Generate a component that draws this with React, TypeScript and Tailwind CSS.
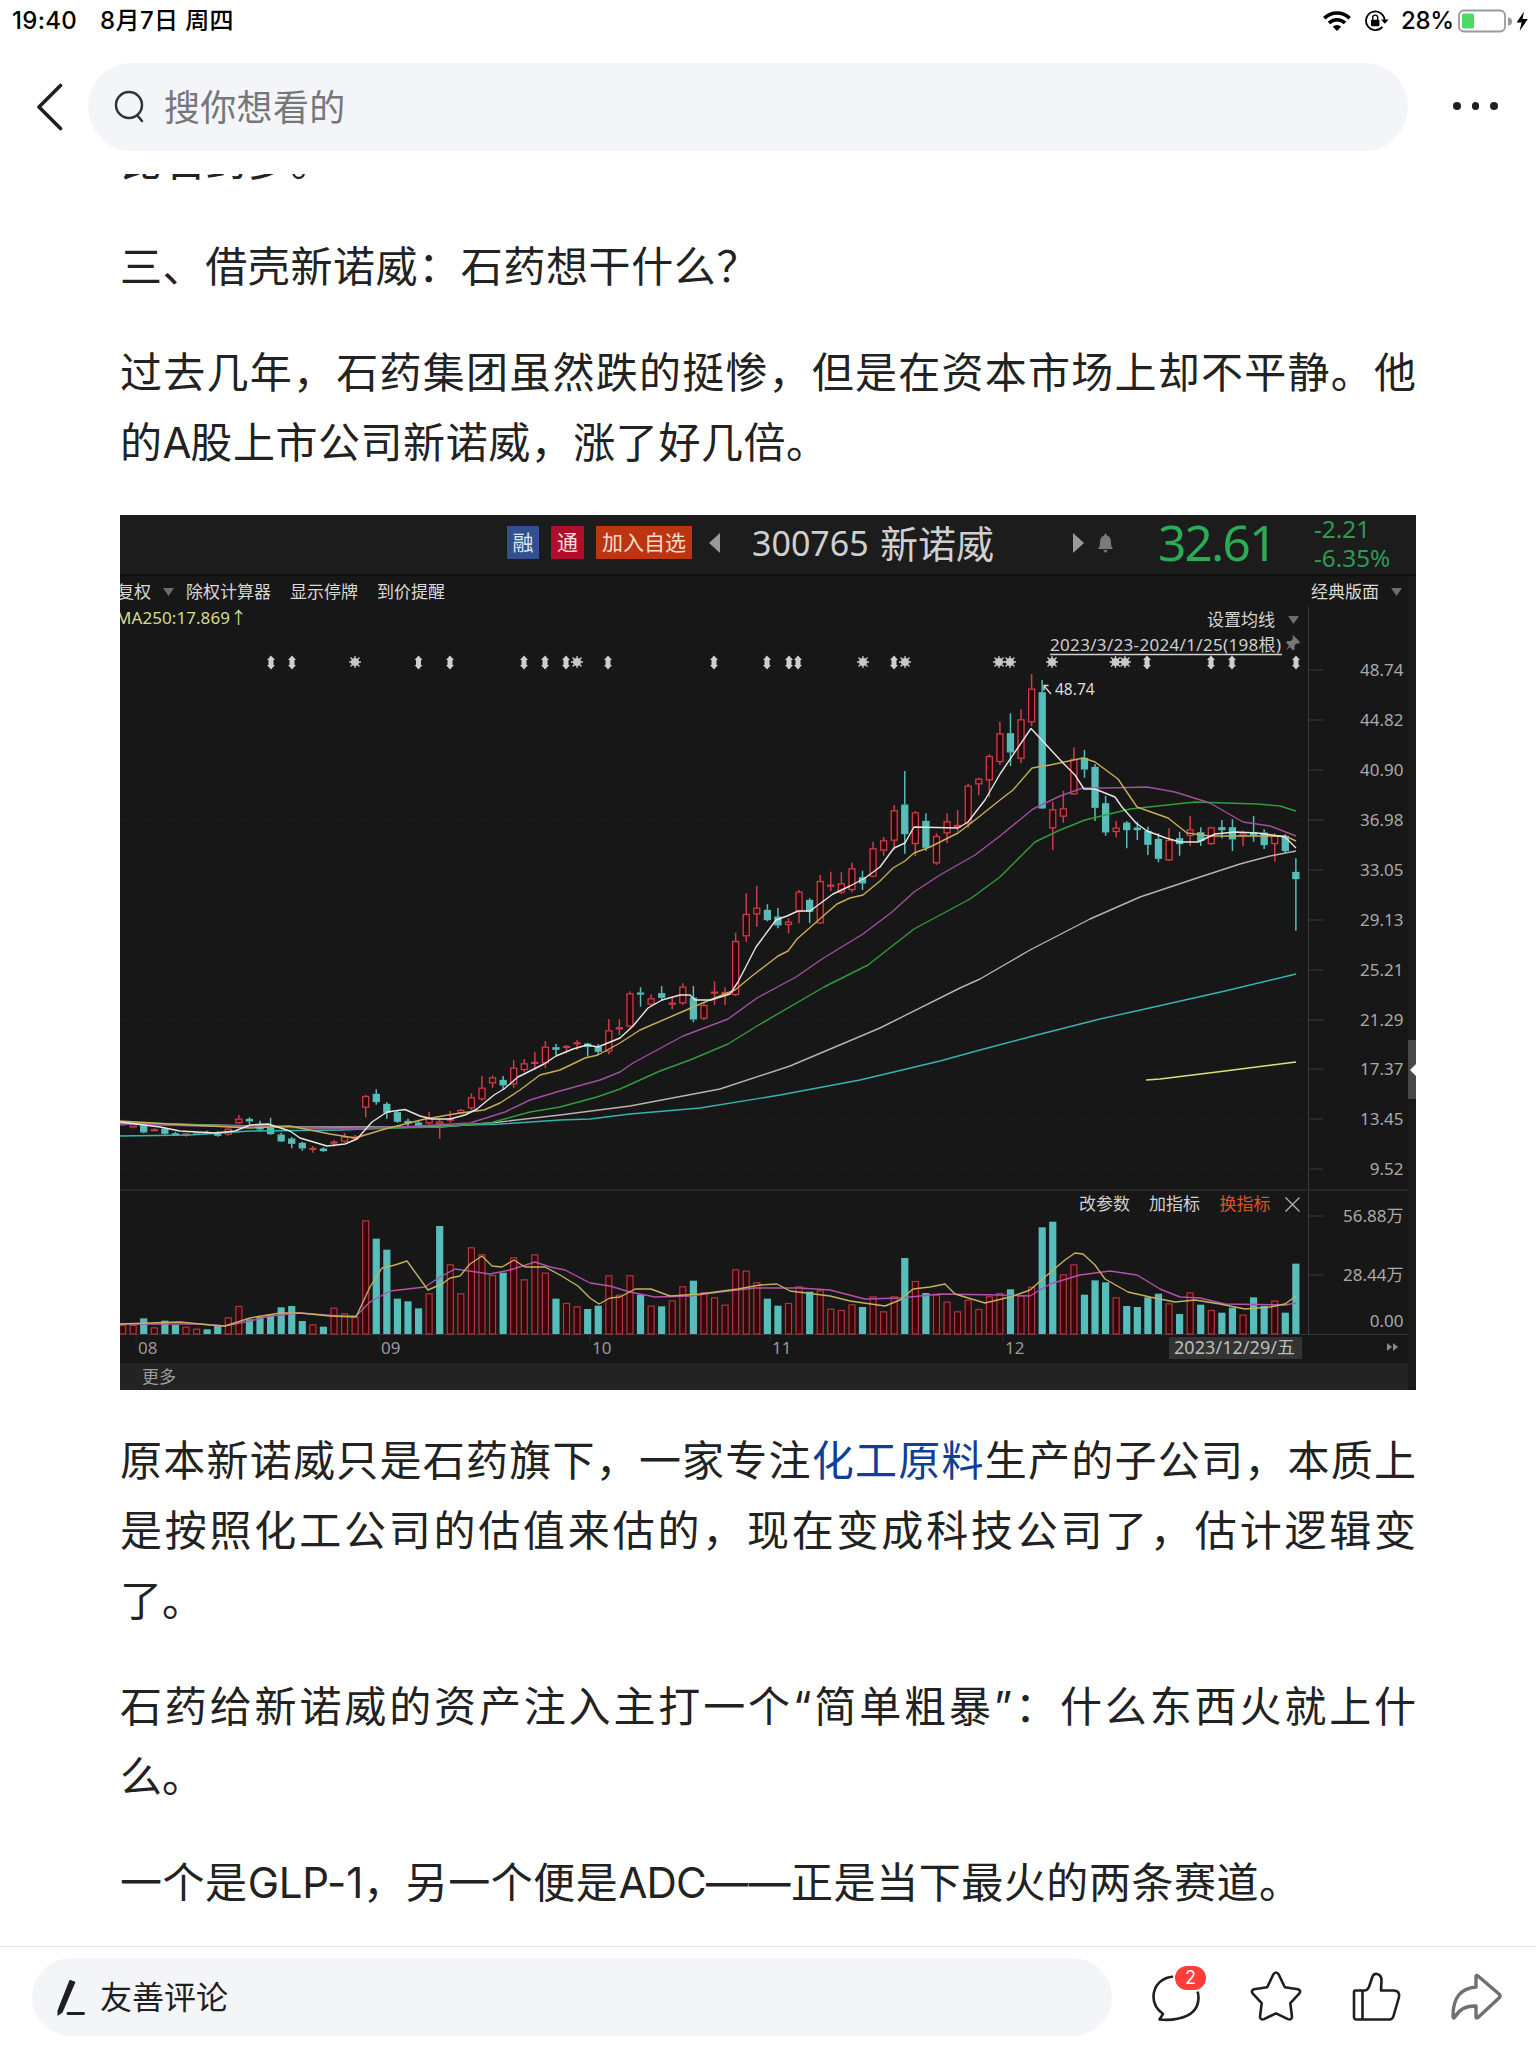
type Row = readonly [string, number, number, number, number];

const X0 = 122.6;
const STEP = 10.57;

const PRICE_TICKS = [
  ["48.74", 670],
  ["44.82", 720],
  ["40.90", 770],
  ["36.98", 820],
  ["33.05", 870],
  ["29.13", 920],
  ["25.21", 970],
  ["21.29", 1020],
  ["17.37", 1069],
  ["13.45", 1119],
  ["9.52", 1169],
  ["56.88万", 1216],
  ["28.44万", 1275],
] as const;

const MONTHS = [
  ["08", 138],
  ["09", 381],
  ["10", 592],
  ["11", 772],
  ["12", 1005],
] as const;

const ARROWS = [271, 292, 418.5, 450, 524, 545, 566, 608, 714, 767, 789, 798, 894, 1147, 1211, 1232, 1296];
const STARS = [355, 577, 863, 905, 999, 1010, 1052, 1115.5, 1125];

// colour, high, body top, body bottom, low - in thirds of a pixel below `base`
const SEGMENTS: { base: number; rows: Row[] }[] = [
  {
    base: 1040,
    rows: [
      ["r", 245, 248, 256, 258], ["r", 245, 252, 262, 265], ["c", 252, 256, 277, 280], ["r", 265, 268, 272, 274],
      ["c", 262, 266, 281, 285], ["c", 275, 280, 285, 287], ["r", 278, 280, 287, 290], ["r", 274, 277, 281, 285],
      ["c", 272, 276, 280, 283], ["c", 274, 277, 287, 290], ["r", 262, 266, 284, 287], ["r", 225, 236, 250, 252],
      ["c", 232, 237, 244, 252], ["c", 242, 252, 268, 275], ["c", 233, 262, 282, 284], ["c", 278, 284, 304, 306],
      ["c", 291, 296, 311, 325], ["c", 305, 309, 325, 332], ["r", 318, 324, 329, 338], ["c", 322, 326, 333, 335],
      ["r", 300, 305, 310, 320], ["r", 278, 290, 305, 308], ["r", 284, 290, 296, 298], ["r", 165, 168, 203, 232],
      ["c", 148, 162, 186, 194], ["c", 186, 192, 218, 236], ["c", 212, 217, 245, 248], ["c", 236, 243, 250, 258],
      ["c", 243, 248, 257, 262], ["r", 216, 236, 250, 254], ["r", 238, 244, 252, 297], ["r", 213, 236, 242, 248],
      ["r", 207, 210, 220, 223], ["r", 160, 172, 205, 210], ["r", 108, 143, 178, 182], ["r", 106, 112, 130, 143],
      ["c", 108, 120, 136, 150], ["r", 60, 83, 133, 143], ["r", 57, 70, 90, 95], ["r", 36, 66, 71, 90],
      ["r", 3, 20, 70, 84], ["c", 12, 22, 29, 45], ["r", 15, 18, 23, 40], ["r", 0, 7, 12, 30],
    ],
  },
  {
    base: 740,
    rows: [
      ["c", 908, 911, 920, 950], ["c", 912, 920, 935, 945], ["r", 838, 871, 935, 943], ["r", 838, 862, 868, 885],
      ["r", 754, 760, 860, 862], ["c", 742, 758, 763, 800], ["r", 763, 775, 794, 797], ["c", 738, 760, 773, 783],
      ["r", 770, 788, 794, 808], ["r", 730, 740, 790, 795], ["c", 738, 773, 838, 847], ["r", 790, 795, 836, 840],
      ["r", 724, 755, 761, 795], ["r", 742, 756, 762, 795], ["r", 578, 603, 765, 768], ["r", 460, 522, 589, 605],
      ["r", 437, 503, 523, 560], ["c", 493, 510, 540, 544], ["c", 504, 530, 556, 565], ["r", 535, 545, 555, 580],
      ["r", 450, 455, 515, 550], ["c", 475, 480, 515, 550], ["r", 405, 423, 550, 552], ["r", 395, 434, 440, 453],
      ["r", 397, 430, 458, 462], ["r", 368, 385, 450, 457], ["c", 392, 412, 430, 450], ["r", 305, 325, 410, 412],
      ["r", 291, 301, 332, 347], ["r", 195, 211, 302, 330], ["c", 93, 194, 282, 341], ["r", 213, 217, 312, 348],
      ["c", 220, 243, 323, 333], ["r", 280, 288, 370, 375], ["r", 220, 244, 280, 310], ["r", 210, 255, 262, 275],
      ["r", 132, 137, 250, 263], ["r", 113, 116, 133, 165], ["r", 43, 48, 121, 172],
    ],
  },
  {
    base: 640,
    rows: [
      ["r", 245, 280, 366, 375], ["c", 220, 280, 337, 378], ["r", 208, 238, 356, 370], ["r", 102, 146, 247, 258],
      ["c", 120, 157, 505, 507], ["r", 485, 508, 565, 630], ["r", 452, 505, 530, 548], ["r", 322, 357, 463, 465],
      ["c", 330, 354, 388, 413], ["c", 372, 381, 503, 543], ["c", 467, 490, 577, 587], ["r", 543, 563, 576, 592],
      ["c", 543, 548, 570, 625], ["c", 545, 563, 570, 600], ["c", 560, 573, 614, 645], ["c", 580, 597, 656, 667],
      ["r", 565, 600, 661, 663], ["c", 575, 595, 612, 647], ["r", 527, 568, 588, 618], ["c", 562, 577, 603, 618],
      ["r", 560, 562, 612, 615], ["c", 540, 562, 570, 595], ["c", 538, 562, 598, 633], ["r", 572, 580, 588, 618],
      ["c", 528, 578, 586, 605], ["c", 568, 578, 615, 627], ["r", 580, 587, 612, 665], ["c", 583, 588, 633, 640],
      ["c", 655, 696, 717, 872],
    ],
  },
];

const CANDLES = SEGMENTS.flatMap(({ base, rows }) =>
  rows.map(([kind, high, top, bottom, low]) => ({
    up: kind === "r",
    high: base + high / 3,
    top: base + top / 3,
    bottom: base + bottom / 3,
    low: base + low / 3,
  })),
);

const VOLUMES = [
  27, 27, 47, 20, 40, 27, 22, 16, 14, 24, 50, 84, 44, 52, 59, 80, 84, 39, 29, 22, 79, 62, 52, 341, 286, 253, 106, 98,
  77, 122, 324, 209, 122, 260, 239, 177, 184, 230, 164, 239, 184, 106, 93, 83, 75, 85, 176, 118, 176, 118, 85, 83, 101,
  143, 160, 125, 110, 88, 194, 190, 155, 106, 85, 93, 143, 127, 131, 76, 72, 89, 81, 113, 68, 113, 228, 159, 123, 118,
  97, 68, 103, 75, 113, 123, 134, 115, 142, 320, 337, 179, 209, 118, 161, 155, 110, 84, 81, 110, 121, 92, 60, 125, 88,
  72, 64, 79, 58, 110, 84, 100, 64, 211,
];

const FILLED_VOLUMES = [30, 88];

const LINES = [
  {
    color: "#35b5b0",
    points:
      "120,1136 190,1135 250,1131 340,1130 440,1126 500,1124 560,1120 590,1119 630,1114 700,1108 780,1095 860,1080 940,1061 980,1050 1033,1036 1100,1019 1145,1009 1225,991 1296,974",
  },
  {
    color: "#b9b3ae",
    points:
      "120,1123 300,1127 440,1127 500,1122 560,1115 630,1106 720,1089 790,1066 880,1028 960,988 980,979 1030,950 1090,919 1140,897 1200,877 1240,864 1270,856 1296,851",
  },
  {
    color: "#2f9e3c",
    points:
      "120,1122 200,1125 270,1127 350,1129 440,1127 490,1123 530,1112 560,1107 597,1097 620,1089 660,1071 690,1060 728,1044 757,1026 824,987 868,965 914,929 970,899 1000,877 1035,842 1060,830 1085,820 1130,809 1195,802 1257,804 1280,806 1296,811",
  },
  {
    color: "#a14fa3",
    points:
      "120,1124 200,1126 270,1126 330,1129 400,1127 470,1123 505,1112 530,1100 560,1091 600,1080 620,1072 633,1063 683,1036 728,1019 757,998 796,977 822,959 863,934 892,912 914,892 940,875 975,855 1000,836 1033,809 1060,796 1083,788 1105,788 1147,787 1175,792 1210,803 1243,822 1270,826 1296,836",
  },
  {
    color: "#c9ad55",
    points:
      "120,1121 170,1124 250,1128 290,1126 330,1134 355,1138 385,1129 425,1119 460,1113 484,1110 500,1103 520,1090 540,1075 560,1070 585,1058 598,1055 620,1043 640,1030 684,1011 712,999 735,990 752,976 778,956 788,951 797,939 822,917 837,904 850,898 863,895 880,881 893,868 905,861 914,853 930,847 958,833 975,820 1000,800 1013,790 1032,768 1050,765 1083,758 1095,762 1118,779 1137,807 1168,818 1187,833 1210,836 1257,836 1285,836 1296,841",
  },
  {
    color: "#e8e6e0",
    points:
      "120,1122 160,1127 180,1131 215,1133 235,1131 250,1125 268,1124 290,1131 300,1138 327,1146 345,1144 357,1139 372,1122 387,1112 405,1109.5 420,1116 432,1119 450,1119 465,1115 477,1109 494,1095 504,1089 518,1077 544,1064 556,1056 573,1049 587,1045 598,1047 620,1038 633,1026 648,1008 662,1000 680,995 690,995 695,1000 711,1000 730,994 738,982 756,947 776,920 787,916 798,911 810,911 833,894 850,886 865,878 880,867 894,848 905,843 914,827 958,828 968,822 985,800 1000,774 1031,728.5 1064,764 1075,775 1084,789 1095,789 1115,797 1122,807 1136,823 1147,831 1166,838 1180,842 1198,842 1215,834 1235,832 1257,833 1272,835 1285,837 1296,848",
  },
  { color: "#dfdf7a", points: "1146,1080 1160,1079 1225,1071 1296,1062" },
  {
    color: "#b552ac",
    points:
      "120,1324 200,1324 225,1326 250,1321 270,1316 300,1313 340,1316 356,1316 370,1302 390,1291 425,1287 440,1277 455,1269 490,1274 510,1270 535,1262 550,1267 565,1270 590,1283 610,1286 630,1292 655,1297 690,1296 720,1292 755,1288 800,1288 830,1290 865,1299 900,1298 940,1294 1000,1295 1030,1296 1050,1284 1080,1275 1110,1271 1137,1275 1160,1289 1180,1297 1200,1298 1225,1304 1285,1305 1296,1303",
  },
  {
    color: "#c3b25c",
    points:
      "120,1324 180,1322 210,1325 225,1326 250,1318 280,1313 300,1313 330,1316 356,1317 370,1287 382,1268 395,1265 407,1261 428,1290 442,1284 450,1278 460,1276 470,1264 482,1256 492,1266 502,1267 514,1260 525,1267 545,1267 560,1275 578,1286 590,1298 599,1304 610,1298 620,1297 635,1289 651,1289 670,1296 700,1294 738,1289 760,1285 777,1284 790,1291 830,1296 850,1301 885,1306 900,1300 913,1289 930,1287 945,1284 955,1294 985,1303 1010,1297 1030,1290 1053,1270 1065,1260 1075,1253 1083,1254 1095,1265 1105,1279 1128,1292 1150,1297 1175,1302 1195,1300 1220,1304 1245,1309 1270,1307 1285,1304 1296,1296",
  },
];

function StatusBar() {
  return (
    <div className="flex h-[42px] items-center justify-between pl-3 pr-1.5 text-[24px] font-medium text-black">
      <div className="flex items-center">
        <span className="w-[88px] tracking-[0.3px]">19:40</span>
        <span className="tracking-[0.4px]">8月7日 周四</span>
      </div>
      <div className="flex items-center">
        <svg className="h-5 w-7" viewBox="0 0 28 20" fill="none" stroke="#000" strokeWidth="3.6">
          <path d="M1.3 7.2a18 18 0 0 1 25.4 0" />
          <path d="M6 12a11.4 11.4 0 0 1 16 0" />
          <path d="M14 20l-4.2-4.2a6 6 0 0 1 8.4 0z" fill="#000" stroke="none" />
        </svg>
        <svg className="ml-3.5 h-[22px] w-6" viewBox="0 0 24 22" fill="none" stroke="#000" strokeWidth="1.8">
          <path d="M17.4 16.8A9.3 9.3 0 1 1 19.6 10" />
          <path d="M16 9.6h7.6l-3.8 4.2z" fill="#000" stroke="none" />
          <rect x="6" y="9.8" width="8.4" height="6.4" rx="1" fill="#000" stroke="none" />
          <path d="M7.7 10V7.6a2.5 2.5 0 0 1 5 0V10" strokeWidth="1.4" />
        </svg>
        <span className="ml-3 w-[57px] tracking-[-0.3px]">28%</span>
        <svg className="h-6 w-[72px]" viewBox="0 0 72 24">
          <rect x="1" y="1.5" width="46" height="21" rx="5" fill="none" stroke="#9a9a9a" strokeWidth="1.8" />
          <rect x="4" y="4.5" width="12" height="15" rx="1.5" fill="#4cd964" />
          <path d="M50 8.5a4 4 0 0 1 0 8z" fill="#9a9a9a" />
          <path d="M66 2.5l-7.4 11h5l-2 8.5 8.2-12h-5.2z" fill="#000" />
        </svg>
      </div>
    </div>
  );
}

function SearchHeader() {
  return (
    <div className="flex h-[132px] pt-[21px]">
      <div className="flex h-[88px] w-[88px] items-center pl-9">
        <svg className="h-12 w-7" viewBox="0 0 28 48" fill="none" stroke="#1f1f1f" strokeWidth="3.6" strokeLinecap="round" strokeLinejoin="round">
          <path d="M24.5 2.5L3 24l21.5 21.5" />
        </svg>
      </div>
      <div className="flex h-[88px] w-[1320px] items-center rounded-full bg-[#f4f5f8] pl-[26px]">
        <svg className="h-9 w-8" viewBox="0 0 32 36" fill="none" stroke="#333" strokeWidth="2.5" strokeLinecap="round">
          <circle cx="15" cy="16" r="13" />
          <path d="M23.5 26.5l4.5 5.5" />
        </svg>
        <span className="ml-[18px] pt-0.5 text-[36px] tracking-[0.3px] text-[#76777a]">搜你想看的</span>
      </div>
      <div className="flex h-[86px] items-center gap-[11px] pl-[45px]">
        <span className="h-[7.5px] w-[7.5px] rounded-full bg-[#1f1f1f]" />
        <span className="h-[7.5px] w-[7.5px] rounded-full bg-[#1f1f1f]" />
        <span className="h-[7.5px] w-[7.5px] rounded-full bg-[#1f1f1f]" />
      </div>
    </div>
  );
}

function Caret({ className = "" }: { className?: string }) {
  return (
    <svg className={`h-2 w-[11px] shrink-0 ${className}`} viewBox="0 0 11 8" fill="#6d6d6d">
      <path d="M0 0h11L5.5 8z" />
    </svg>
  );
}

function StockChart() {
  return (
    <svg className="block h-[755px] w-[1288px]" viewBox="120 607 1288 755" fontSize="17" fill="#a9a9a9">
      {PRICE_TICKS.map(([label, y]) => (
        <g key={label}>
          <line x1="120" x2="1308" y1={y} y2={y} stroke="#242424" strokeDasharray="2 4" />
          <line x1="1308" x2="1323" y1={y} y2={y} stroke="#3c3c3c" />
          <text x="1403.5" y={y + 6.4} textAnchor="end">{label}</text>
        </g>
      ))}
      <text x="1403.5" y="1326.5" textAnchor="end">0.00</text>
      <path d="M1308.5 607V1334" stroke="#3c3c3c" />
      <path d="M120 1190H1408" stroke="#2e2e2e" strokeWidth="1.5" />
      <path d="M120 1334.5H1408" stroke="#343434" />

      <text x="116" y="623.5" fill="#d3dd90" textLength="131">MA250:17.869↑</text>
      <text x="1207" y="626" fill="#d2d2d2">设置均线</text>
      <path d="M1288 616h11l-5.500 8z" fill="#6d6d6d" />
      <text x="1050" y="651" fill="#cfcfcf" textLength="231">2023/3/23-2024/1/25(198根)</text>
      <path d="M1050 654.500H1282" stroke="#cfcfcf" strokeWidth="1.300" />
      <path d="M1293 635l7 7-2 2-1.500-.5-2 2 0 4-1.500 1-3-3.500-4 3.500 3-5-3-3 1.500-1.500h3.500l2-2.500-.5-1.500z" fill="#777" />

      {ARROWS.map((x) => (
        <path key={x} d={`M${x} 655.500l4 4.500h-1.500v5h1.500l-4 4.500-4-4.500h1.500v-5h-1.500z`} fill="#cfcfcf" />
      ))}
      {STARS.map((x) => (
        <g key={x} stroke="#c8c8c8" strokeWidth="1.3">
          <circle cx={x} cy="662" r="3.300" fill="#c8c8c8" />
          <path d={`M${x - 6} 662h12M${x} 656v12M${x - 4.5} 657.500l9 9M${x + 4.5} 657.500l-9 9`} />
        </g>
      ))}

      {CANDLES.map(({ up, high, top, bottom, low }, i) => {
        const x = X0 + i * STEP;
        const color = up ? "#d03c49" : "#56bdba";
        return (
          <g key={i} stroke={color} strokeWidth="1.3">
            <path d={`M${x} ${high}V${top}M${x} ${bottom}V${low}`} strokeWidth="1.5" />
            <rect x={x - 3} y={top + 0.5} width="6" height={Math.max(bottom - top - 1, 0.8)} fill={up ? "#280508" : color} />
          </g>
        );
      })}

      {VOLUMES.map((v, i) => {
        const x = X0 + i * STEP;
        const hollow = CANDLES[i].up && !FILLED_VOLUMES.includes(i);
        return hollow ? (
          <rect key={i} x={x - 3} y={1334.5 - v / 3} width="6" height={v / 3 - 0.5} fill="#3a0408" stroke="#b03842" strokeWidth="1.2" />
        ) : (
          <rect key={i} x={x - 3.6} y={1334 - v / 3} width="7.200" height={v / 3} fill="#56bdba" />
        );
      })}

      {LINES.map(({ color, points }) => (
        <polyline key={points} points={points} fill="none" stroke={color} strokeWidth="1.4" strokeLinejoin="round" />
      ))}

      <path d="M1051 694l-7-8m0 4.500v-5h4.500" stroke="#ddd" strokeWidth="1.300" fill="none" />
      <text x="1055" y="695" fontSize="15.500" fill="#dcdcdc">48.74</text>

      <g fill="#cfcfcf">
        <text x="1079" y="1210">改参数</text>
        <text x="1149" y="1210">加指标</text>
        <text x="1219.500" y="1210" fill="#dc5420">换指标</text>
      </g>
      <path d="M1285.500 1197.500l14 14m0-14l-14 14" stroke="#b5b5b5" strokeWidth="1.300" />

      {MONTHS.map(([label, x]) => (
        <g key={label}>
          <path d={`M${x - 2} 1334v8`} stroke="#2c2c2c" />
          <text x={x} y="1353.500" fill="#999">{label}</text>
        </g>
      ))}
      <rect x="1169" y="1337" width="133" height="22" fill="#333" />
      <text x="1174" y="1354" fontSize="18" fill="#bdbdbd" textLength="121">2023/12/29/五</text>
      <path d="M1387 1343l5 4-5 4zM1393 1343l5 4-5 4z" fill="#8a8a8a" />
    </svg>
  );
}

function StockPanel() {
  return (
    <div className="flex h-[875px] flex-col overflow-hidden bg-[#171717] font-['Noto_Sans','Noto_Sans_CJK_SC',sans-serif]">
      <div className="flex h-[61px] shrink-0 items-center border-b-2 border-[#101010] bg-[#1c1c1c] pb-1 pl-[387px] leading-none">
        <span className="flex h-[33px] w-[32px] items-center justify-center bg-[#31508f] text-[21px] text-[#dfe6f2]">融</span>
        <span className="ml-3 flex h-[33px] w-[33px] items-center justify-center bg-[#b00f2b] text-[21px] text-[#f2dede]">通</span>
        <span className="ml-3 flex h-[33px] w-[96px] items-center justify-center bg-[#bd3510] text-[21px] text-[#f3ddc8]">加入自选</span>
        <svg className="ml-[17px] h-5 w-[11px]" viewBox="0 0 11 20" fill="#9a9a9a">
          <path d="M11 0v20L0 10z" />
        </svg>
        <span className="ml-[32px] w-[128px] text-[34px] leading-[48px] text-[#d0d0d0]">300765</span>
        <span className="text-[38px] leading-[54px] text-[#d0d0d0]">新诺威</span>
        <svg className="ml-[79px] h-5 w-[11px]" viewBox="0 0 11 20" fill="#9a9a9a">
          <path d="M0 0v20l11-10z" />
        </svg>
        <svg className="ml-3.5 h-5 w-[15px]" viewBox="0 0 15 20" fill="#7a7a7a">
          <path d="M7.500 0l1.500 2.500c3 1 4 3.500 4 7 0 3 .5 4.500 2 6.500H0c1.500-2 2-3.500 2-6.500 0-3.500 1-6 4-7zM5 17h5l-2.500 3z" />
        </svg>
        <span className="ml-[45px] w-[156px] text-[49.5px] leading-[55px] tracking-[-1.8px] text-[#2cab57]">32.61</span>
        <span className="flex flex-col text-[24.3px] leading-[29px] text-[#2e9a54]">
          <span>-2.21</span>
          <span>-6.35%</span>
        </span>
      </div>
      <div className="flex flex-1">
        <div className="w-[1288px]">
          <div className="flex h-[31px] items-center text-[17px] text-[#d8d8d8]">
            <span className="-ml-[3px]">复权</span>
            <Caret className="ml-3" />
            <span className="ml-3">除权计算器</span>
            <span className="ml-[19px]">显示停牌</span>
            <span className="ml-[19px]">到价提醒</span>
            <span className="ml-auto">经典版面</span>
            <Caret className="ml-3 mr-1.5" />
          </div>
          <StockChart />
          <div className="flex h-7 items-center border-t border-[#101010] bg-[#232323] pl-[22px] text-[17px] text-[#9c9c9c]">更多</div>
        </div>
        <div className="flex-1 bg-[#1a1a1a] pt-[464px]">
          <div className="flex h-[59px] items-center justify-end bg-[#474747]">
            <svg className="h-3 w-1.5" viewBox="0 0 6 12" fill="#fff">
              <path d="M6 0v12L0 6z" />
            </svg>
          </div>
        </div>
      </div>
    </div>
  );
}

function Full({ children }: { children: React.ReactNode }) {
  return <span className="block whitespace-nowrap [text-align-last:justify]">{children}</span>;
}

function Article() {
  return (
    <div className="h-[1772px] overflow-hidden px-[120px]">
      <div className="-mt-[48px] text-[42px] leading-[70px] text-[#222]">
        <p className="tracking-[0.6px]">比石药多。</p>
        <p className="mt-9 tracking-[0.6px]">三、借壳新诺威：石药想干什么？</p>
        <p className="mt-9">
          <Full>过去几年，石药集团虽然跌的挺惨，但是在资本市场上却不平静。他</Full>
          <span className="block tracking-[0.55px]">
            的<span className="tracking-[-1.2px]">A</span>股上市公司新诺威，涨了好几倍。
          </span>
        </p>
        <div className="mt-[37px]">
          <StockPanel />
        </div>
        <p className="mt-9">
          <Full>
            原本新诺威只是石药旗下，一家专注<a className="text-[#0f3f97]">化工原料</a>生产的子公司，本质上
          </Full>
          <Full>是按照化工公司的估值来估的，现在变成科技公司了，估计逻辑变</Full>
          <span className="block">了。</span>
        </p>
        <p className="mt-9">
          <Full>石药给新诺威的资产注入主打一个“简单粗暴”：什么东西火就上什</Full>
          <span className="block">么。</span>
        </p>
        <p className="mt-9 tracking-[0.55px]">
          一个是<span className="tracking-[-0.2px]">GLP-1</span>，另一个便是<span className="tracking-[-0.8px]">ADC</span>
          ——正是当下最火的两条赛道。
        </p>
      </div>
    </div>
  );
}

function BottomBar() {
  return (
    <div className="flex h-[102px] border-t border-[#e3e3e5] bg-white pl-8 pt-[11px]">
      <div className="flex h-[78px] w-[1080px] items-center rounded-full bg-[#f4f5f8] pl-6">
        <svg className="h-[38px] w-[30px]" viewBox="0 0 30 38">
          <path d="M14.500 2l4 1.600c.8.3.9.8.6 1.500L6.500 34.500 1.500 38V32.500L13.200 2.700c.3-.7.6-1 1.300-.7z" fill="#1f1f1f" />
          <path d="M12 35.500h15.500" stroke="#1f1f1f" strokeWidth="2.800" strokeLinecap="round" />
        </svg>
        <span className="ml-[14px] pt-0.5 text-[32px] text-[#1f1f1f]">友善评论</span>
      </div>
      <div className="flex h-[78px] flex-1 items-center pl-[38px]">
        <div className="relative h-[52px] w-[52px]">
          <svg className="h-[52px] w-[52px]" viewBox="0 0 52 52" fill="none" stroke="#1f1f1f" strokeWidth="2.600" strokeLinejoin="round">
            <path d="M25.500 5.500C12 5.500 3.500 14.500 3.500 26c0 7 3.500 12.500 9.500 17l-3.500 5.500c5 .5 12 .5 18-.8C41.500 45 48.500 37.500 48.500 26.500S39 5.500 25.500 5.500z" />
          </svg>
          <span className="absolute -top-[7px] left-[23px] box-content flex h-6 w-[31px] items-center justify-center rounded-full border-2 border-white bg-[#ff3e3b] text-[18px] leading-none text-white">2</span>
        </div>
        <svg className="ml-12 h-[52px] w-[52px]" viewBox="0 0 52 52" fill="none" stroke="#1f1f1f" strokeWidth="2.600" strokeLinejoin="round">
          <path d="M23.300 3.500q2.700-4 5.400 0L34.800 16.200 48 18.300q3.500 1.200 1.200 4.300L40.300 32.200l1.700 13.700q-.5 3.500-4 2.200L26 42.300 14 48.100q-3.500 1.300-4-2.200l1.700-13.700L2.800 22.600q-2.300-3.100 1.200-4.300l13.200-2.100z" />
        </svg>
        <svg className="ml-[50px] h-[52px] w-[50px]" viewBox="0 0 50 52" fill="none" stroke="#1f1f1f" strokeWidth="2.600" strokeLinejoin="round">
          <path d="M10.500 19.500V48.500M3.500 19.500H12q3.500 0 5-3.500l3.500-10.500q1.500-3.200 4.500-2.500 4.500 1 4.500 6.500L29 19.500H42q6 .5 5 6.500L41.500 45q-1 3.500-4 3.500H4.500Q2 48.500 2 46V21q0-1.500 1.500-1.500z" />
        </svg>
        <svg className="ml-12 h-[52px] w-[52px]" viewBox="0 0 52 52" fill="none" stroke="#6f7075" strokeWidth="3.400" strokeLinejoin="round">
          <path d="M26 5.500q0-2 2-.5L49 23q2 2 0 4L28 46.500q-2 1.500-2-1V35C16 34.500 9 38.500 5 46q-2 2.500-2-1C3 27 10 17.500 26 16z" />
        </svg>
      </div>
    </div>
  );
}

export default function App() {
  return (
    <div className="h-[2048px] w-[1536px] overflow-hidden bg-white font-['Inter','Noto_Sans_CJK_SC',sans-serif]">
      <StatusBar />
      <SearchHeader />
      <Article />
      <BottomBar />
    </div>
  );
}
